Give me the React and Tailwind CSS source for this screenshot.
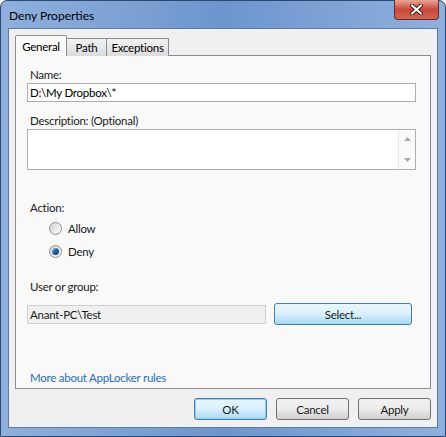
const FONT = 'font-["Lato","Segoe_UI","Noto_Sans",sans-serif]'

// ─── Small Win7 pieces ───────────────────────────────────────────────────────

function Radio({ checked, label }) {
  return (
    <label className="flex items-center gap-[6px] h-[23px] pl-[22px]">
      <span className="w-[13px] h-[13px] rounded-full border border-[#8f8f8f] bg-gradient-to-br from-[#d4d4d4] to-[#fbfbfb] flex items-center justify-center">
        {checked && (
          <span className="w-[7px] h-[7px] rounded-full bg-gradient-to-br from-[#7ec1f0] via-[#1f5f9c] to-[#0c3c70]" />
        )}
      </span>
      <span className="text-[#1a1a1a]">{label}</span>
    </label>
  )
}

function Button({ children, kind = 'normal', className = '' }) {
  const styles = {
    normal: 'border-[#707070] bg-gradient-to-b from-[#f2f2f2] via-[#ebebeb] to-[#cfcfcf]',
    focus: 'border-[#3c7fb1] bg-gradient-to-b from-[#eaf6fd] via-[#d9f0fc] to-[#a7d9f5] shadow-[inset_0_0_0_1px_#8dd0f5]',
    hover: 'border-[#3c7fb1] bg-gradient-to-b from-[#eaf6fd] via-[#d9f0fc] to-[#a7d9f5]',
  }
  return (
    <button className={`h-[22px] rounded-[3px] border text-[#1a1a1a] ${styles[kind]} ${className}`}>
      {children}
    </button>
  )
}

// ─── Main ────────────────────────────────────────────────────────────────────

export default function App() {
  return (
    <div className={`${FONT} text-[11.5px] tracking-[-0.25px] leading-[15px] w-[446px] h-[437px] bg-white`}>
      <div className="w-[446px] h-[437px] rounded-t-[7px] border border-[#2b4a73] bg-gradient-to-r from-[#8fb0dc] via-[#6d95cd] to-[#8eb0de] flex flex-col px-[7px] pb-[8px]">
        {/* Title bar */}
        <div className="h-[29px] flex justify-between items-start">
          <span className="mt-[7px] pl-[1px] text-[#000] text-[12px] tracking-normal">Deny Properties</span>
          <div className="w-[45px] h-[20px] rounded-b-[4px] border border-t-0 border-[#6b2a22] bg-gradient-to-b from-[#e8a495] via-[#c8493a] to-[#d3654f] flex items-center justify-center mr-[-1px] -mt-px">
            <svg width="13" height="11" viewBox="0 0 13 11">
              <path d="M2 1.5 L11 9.5 M11 1.5 L2 9.5" stroke="#3a1410" strokeWidth="4" strokeLinecap="round" />
              <path d="M2 1.5 L11 9.5 M11 1.5 L2 9.5" stroke="#fff" strokeWidth="2.2" strokeLinecap="round" />
            </svg>
          </div>
        </div>

        {/* Client area */}
        <div className="flex-1 bg-[#f0f0f0] border border-[#5c7ca8] flex flex-col px-[6px] pt-[6px] pb-[7px]">
          {/* Tabs */}
          <div className="flex items-end h-[21px] relative z-10">
            <div className="h-[21px] w-[52px] border border-b-0 border-[#898c95] bg-[#f9f9f9] rounded-t-[2px] flex items-center justify-center text-[#000]">
              General
            </div>
            <div className="h-[18px] w-[41px] -ml-px border border-b-0 border-[#898c95] bg-gradient-to-b from-[#f2f2f2] to-[#dcdcdc] flex items-center justify-center">
              Path
            </div>
            <div className="h-[18px] w-[63px] -ml-px border border-b-0 border-[#898c95] bg-gradient-to-b from-[#f2f2f2] to-[#dcdcdc] flex items-center justify-center">
              Exceptions
            </div>
          </div>

          {/* Tab panel */}
          <div className="-mt-px h-[334px] border border-[#898c95] bg-[#f9f9f9] flex flex-col pl-[11px] pr-[14px] pt-[11px]">
            <div className="pl-[3px] text-[#1a1a1a]">Name:</div>
            <div className="mt-px h-[19px] border border-[#abadb3] bg-white flex items-center pl-[2px]">
              D:\My Dropbox\*
            </div>

            <div className="mt-[11px] pl-[3px] text-[#1a1a1a]">Description: (Optional)</div>
            <div className="mt-px h-[41px] border border-[#abadb3] bg-white flex justify-end">
              <div className="w-[17px] flex flex-col items-center justify-between py-[7px] border-l border-[#eaeaea] bg-[#fafafa]">
                <svg width="7" height="4" viewBox="0 0 7 4"><path d="M0 4 L3.5 0 L7 4 Z" fill="#a8a8a8" /></svg>
                <svg width="7" height="4" viewBox="0 0 7 4"><path d="M0 0 L3.5 4 L7 0 Z" fill="#a8a8a8" /></svg>
              </div>
            </div>

            <div className="mt-[30px] pl-[3px] text-[#1a1a1a]">Action:</div>
            <div className="mt-[2px] flex flex-col">
              <Radio label="Allow" />
              <Radio label="Deny" checked />
            </div>

            <div className="mt-[16px] pl-[3px] text-[#1a1a1a]">User or group:</div>
            <div className="mt-[9px] flex items-center gap-[8px]">
              <div className="w-[239px] h-[19px] border border-[#cfcfcf] bg-[#f0f0f0] flex items-center pl-[2px] text-[#1a1a1a]">
                Anant-PC\Test
              </div>
              <Button kind="hover" className="w-[138px] h-[21px]">Select...</Button>
            </div>

            <a href="#" className="mt-[45px] pl-[3px] text-[#1f6ebd]">More about AppLocker rules</a>
          </div>

          {/* Dialog buttons */}
          <div className="mt-[9px] flex justify-end gap-[9px]">
            <Button kind="focus" className="w-[73px]">OK</Button>
            <Button className="w-[73px]">Cancel</Button>
            <Button className="w-[73px]">Apply</Button>
          </div>
        </div>
      </div>
    </div>
  )
}
